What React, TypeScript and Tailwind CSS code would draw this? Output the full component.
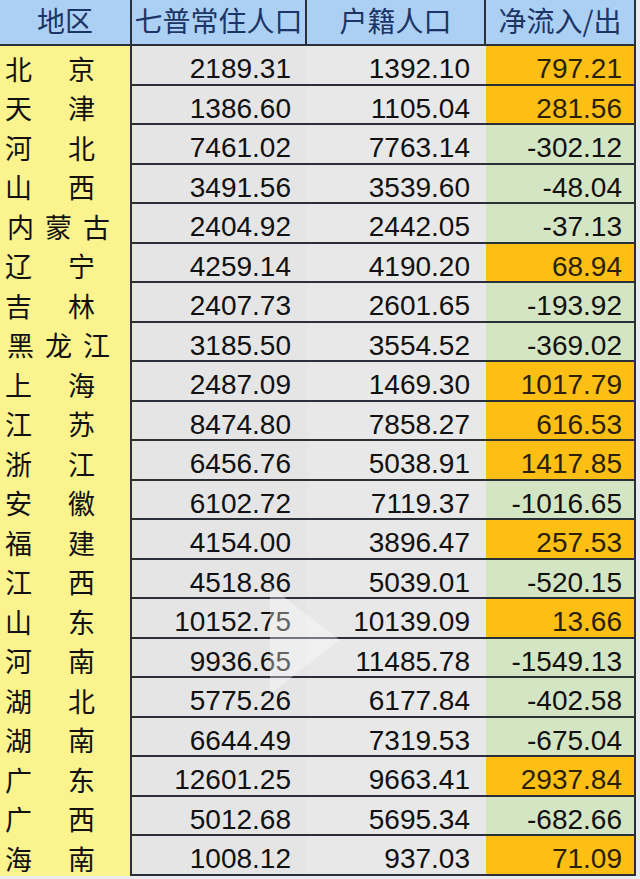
import React from 'react';

type Row = { name: string; census: string; hukou: string; net: string };

const rows: Row[] = [
  { name: '北京', census: '2189.31', hukou: '1392.10', net: '797.21' },
  { name: '天津', census: '1386.60', hukou: '1105.04', net: '281.56' },
  { name: '河北', census: '7461.02', hukou: '7763.14', net: '-302.12' },
  { name: '山西', census: '3491.56', hukou: '3539.60', net: '-48.04' },
  { name: '内蒙古', census: '2404.92', hukou: '2442.05', net: '-37.13' },
  { name: '辽宁', census: '4259.14', hukou: '4190.20', net: '68.94' },
  { name: '吉林', census: '2407.73', hukou: '2601.65', net: '-193.92' },
  { name: '黑龙江', census: '3185.50', hukou: '3554.52', net: '-369.02' },
  { name: '上海', census: '2487.09', hukou: '1469.30', net: '1017.79' },
  { name: '江苏', census: '8474.80', hukou: '7858.27', net: '616.53' },
  { name: '浙江', census: '6456.76', hukou: '5038.91', net: '1417.85' },
  { name: '安徽', census: '6102.72', hukou: '7119.37', net: '-1016.65' },
  { name: '福建', census: '4154.00', hukou: '3896.47', net: '257.53' },
  { name: '江西', census: '4518.86', hukou: '5039.01', net: '-520.15' },
  { name: '山东', census: '10152.75', hukou: '10139.09', net: '13.66' },
  { name: '河南', census: '9936.65', hukou: '11485.78', net: '-1549.13' },
  { name: '湖北', census: '5775.26', hukou: '6177.84', net: '-402.58' },
  { name: '湖南', census: '6644.49', hukou: '7319.53', net: '-675.04' },
  { name: '广东', census: '12601.25', hukou: '9663.41', net: '2937.84' },
  { name: '广西', census: '5012.68', hukou: '5695.34', net: '-682.66' },
  { name: '海南', census: '1008.12', hukou: '937.03', net: '71.09' },
];

const cjk = { fontFamily: '"Noto Sans CJK SC", sans-serif' };
const num = { fontFamily: '"Liberation Sans", Arial, sans-serif' };

export default function App() {
  return (
    <div className="relative w-[640px] h-[879px] overflow-hidden bg-[#e8ecf0]">
      {/* 表头 */}
      <div
        className="grid grid-cols-[132px_175px_179px_150px] h-[46px] bg-[#acd0f4] border-b-2 border-[#2a2f38] w-[636px] text-[28px] leading-[30px] text-[#1d3566]"
        style={cjk}
      >
        <div className="border-r-2 border-[#2a2f38] flex justify-center pt-[5px]">地区</div>
        <div className="border-r-2 border-[#2a2f38] flex justify-center pt-[5px] whitespace-nowrap">七普常住人口</div>
        <div className="border-r-2 border-[#2a2f38] flex justify-center pt-[5px]">户籍人口</div>
        <div className="border-r-2 border-[#2a2f38] flex justify-center pt-[5px] whitespace-nowrap">净流入/出</div>
      </div>

      {/* 数据行 */}
      <div className="w-[636px]">
        {rows.map((r) => {
          const positive = !r.net.startsWith('-');
          return (
            <div key={r.name} className="grid grid-cols-[132px_175px_179px_150px] h-[39.5px]">
              <div
                className={`bg-[#fbf38e] border-r-2 border-[#2a2f38] flex items-center pt-[5px] pl-[5px] text-[27px] leading-none text-[#111] whitespace-nowrap ${
                  r.name.length === 3 ? 'tracking-[11px] pl-[7px]' : 'tracking-[36px]'
                }`}
                style={cjk}
              >
                {r.name}
              </div>
              <div
                className="bg-[#e5e5e5] border-b-2 border-[#2a2f38] flex items-center justify-end pr-[16px] pt-[9px] text-[28px] leading-none text-[#111]"
                style={num}
              >
                {r.census}
              </div>
              <div
                className="bg-[#e8e8e8] border-b-2 border-[#2a2f38] flex items-center justify-end pr-[16px] pt-[9px] text-[28px] leading-none text-[#111]"
                style={num}
              >
                {r.hukou}
              </div>
              <div
                className={`border-b-2 border-r-2 border-[#2a2f38] flex items-center justify-end pr-[12px] pt-[9px] text-[28px] leading-none ${
                  positive ? 'bg-[#fdbf14] text-[#2b1f0a]' : 'bg-[#d4e5c3] text-[#111]'
                }`}
                style={num}
              >
                {r.net}
              </div>
            </div>
          );
        })}
      </div>

      {/* 视频播放水印 */}
      <svg className="absolute left-[266px] top-[582px] pointer-events-none" width="80" height="116" viewBox="0 0 80 116">
        <polygon points="4,4 74,58 4,112" fill="#ffffff" fillOpacity="0.35" />
      </svg>
    </div>
  );
}
